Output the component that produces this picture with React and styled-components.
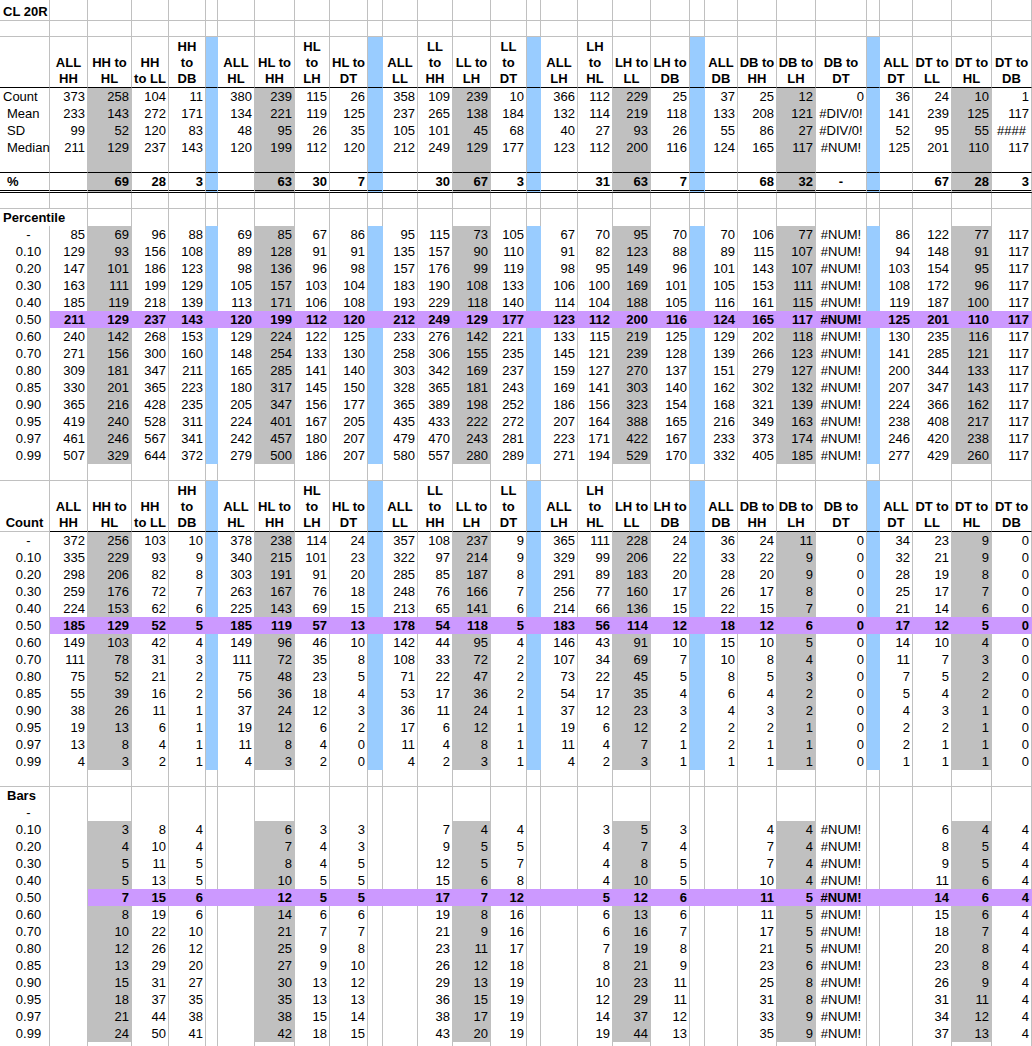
import React from 'react'
import styled, { createGlobalStyle } from 'styled-components'

// column widths in px, read off the sheet
const COLS = [50, 38, 44, 37, 37, 12, 37, 40, 35, 38, 15, 35, 35, 38, 36, 14, 37, 35, 38, 39, 15, 33, 39, 39, 51, 13, 33, 39, 40, 40]
const BLUE = [5, 10, 15, 20, 25]
const GRAY = [2, 7, 13, 18, 23, 28]
const ALL = [1, 6, 11, 16, 21, 26]
const DATA_COLS = COLS.map((_, i) => i).filter(i => i > 0 && !BLUE.includes(i))
const BAR_COLS = DATA_COLS.filter(i => !ALL.includes(i))

const GRID = '#c0c0c0'
const FILLS = { gray: '#c0c0c0', blue: '#99ccff', purple: '#cc99ff' }

const HEADS = [
  ['ALL', 'HH'], ['HH to', 'HL'], ['HH', 'to LL'], ['HH', 'to', 'DB'],
  ['ALL', 'HL'], ['HL to', 'HH'], ['HL', 'to', 'LH'], ['HL to', 'DT'],
  ['ALL', 'LL'], ['LL', 'to', 'HH'], ['LL to', 'LH'], ['LL', 'to', 'DT'],
  ['ALL', 'LH'], ['LH', 'to', 'HL'], ['LH to', 'LL'], ['LH to', 'DB'],
  ['ALL', 'DB'], ['DB to', 'HH'], ['DB to', 'LH'], ['DB to', 'DT'],
  ['ALL', 'DT'], ['DT to', 'LL'], ['DT to', 'HL'], ['DT to', 'DB'],
]

const STATS = [
  ['Count', '373 258 104 11 380 239 115 26 358 109 239 10 366 112 229 25 37 25 12 0 36 24 10 1', 3],
  ['Mean', '233 143 272 171 134 221 119 125 237 265 138 184 132 114 219 118 133 208 121 #DIV/0! 141 239 125 117', 7],
  ['SD', '99 52 120 83 48 95 26 35 105 101 45 68 40 27 93 26 55 86 27 #DIV/0! 52 95 55 ####', 7],
  ['Median', '211 129 237 143 120 199 112 120 212 249 129 177 123 112 200 116 124 165 117 #NUM! 125 201 110 117', 7],
]
const PCT = '69 28 3 63 30 7 30 67 3 31 63 7 68 32 - 67 28 3'

const LEVELS = ['-', '0.10', '0.20', '0.30', '0.40', '0.50', '0.60', '0.70', '0.80', '0.85', '0.90', '0.95', '0.97', '0.99']

const PERCENTILE = [
  '85 69 96 88 69 85 67 86 95 115 73 105 67 70 95 70 70 106 77 #NUM! 86 122 77 117',
  '129 93 156 108 89 128 91 91 135 157 90 110 91 82 123 88 89 115 107 #NUM! 94 148 91 117',
  '147 101 186 123 98 136 96 98 157 176 99 119 98 95 149 96 101 143 107 #NUM! 103 154 95 117',
  '163 111 199 129 105 157 103 104 183 190 108 133 106 100 169 101 105 153 111 #NUM! 108 172 96 117',
  '185 119 218 139 113 171 106 108 193 229 118 140 114 104 188 105 116 161 115 #NUM! 119 187 100 117',
  '211 129 237 143 120 199 112 120 212 249 129 177 123 112 200 116 124 165 117 #NUM! 125 201 110 117',
  '240 142 268 153 129 224 122 125 233 276 142 221 133 115 219 125 129 202 118 #NUM! 130 235 116 117',
  '271 156 300 160 148 254 133 130 258 306 155 235 145 121 239 128 139 266 123 #NUM! 141 285 121 117',
  '309 181 347 211 165 285 141 140 303 342 169 237 159 127 270 137 151 279 127 #NUM! 200 344 133 117',
  '330 201 365 223 180 317 145 150 328 365 181 243 169 141 303 140 162 302 132 #NUM! 207 347 143 117',
  '365 216 428 235 205 347 156 177 365 389 198 252 186 156 323 154 168 321 139 #NUM! 224 366 162 117',
  '419 240 528 311 224 401 167 205 435 433 222 272 207 164 388 165 216 349 163 #NUM! 238 408 217 117',
  '461 246 567 341 242 457 180 207 479 470 243 281 223 171 422 167 233 373 174 #NUM! 246 420 238 117',
  '507 329 644 372 279 500 186 207 580 557 280 289 271 194 529 170 332 405 185 #NUM! 277 429 260 117',
]

const COUNTS = [
  '372 256 103 10 378 238 114 24 357 108 237 9 365 111 228 24 36 24 11 0 34 23 9 0',
  '335 229 93 9 340 215 101 23 322 97 214 9 329 99 206 22 33 22 9 0 32 21 9 0',
  '298 206 82 8 303 191 91 20 285 85 187 8 291 89 183 20 28 20 9 0 28 19 8 0',
  '259 176 72 7 263 167 76 18 248 76 166 7 256 77 160 17 26 17 8 0 25 17 7 0',
  '224 153 62 6 225 143 69 15 213 65 141 6 214 66 136 15 22 15 7 0 21 14 6 0',
  '185 129 52 5 185 119 57 13 178 54 118 5 183 56 114 12 18 12 6 0 17 12 5 0',
  '149 103 42 4 149 96 46 10 142 44 95 4 146 43 91 10 15 10 5 0 14 10 4 0',
  '111 78 31 3 111 72 35 8 108 33 72 2 107 34 69 7 10 8 4 0 11 7 3 0',
  '75 52 21 2 75 48 23 5 71 22 47 2 73 22 45 5 8 5 3 0 7 5 2 0',
  '55 39 16 2 56 36 18 4 53 17 36 2 54 17 35 4 6 4 2 0 5 4 2 0',
  '38 26 11 1 37 24 12 3 36 11 24 1 37 12 23 3 4 3 2 0 4 3 1 0',
  '19 13 6 1 19 12 6 2 17 6 12 1 19 6 12 2 2 2 1 0 2 2 1 0',
  '13 8 4 1 11 8 4 0 11 4 8 1 11 4 7 1 2 1 1 0 2 1 1 0',
  '4 3 2 1 4 3 2 0 4 2 3 1 4 2 3 1 1 1 1 0 1 1 1 0',
]

const BARS = [
  '3 8 4 6 3 3 7 4 4 3 5 3 4 4 #NUM! 6 4 4',
  '4 10 4 7 4 3 9 5 5 4 7 4 7 4 #NUM! 8 5 4',
  '5 11 5 8 4 5 12 5 7 4 8 5 7 4 #NUM! 9 5 4',
  '5 13 5 10 5 5 15 6 8 4 10 5 10 4 #NUM! 11 6 4',
  '7 15 6 12 5 5 17 7 12 5 12 6 11 5 #NUM! 14 6 4',
  '8 19 6 14 6 6 19 8 16 6 13 6 11 5 #NUM! 15 6 4',
  '10 22 10 21 7 7 21 9 16 6 16 7 17 5 #NUM! 18 7 4',
  '12 26 12 25 9 8 23 11 17 7 19 8 21 5 #NUM! 20 8 4',
  '13 29 20 27 9 10 26 12 18 8 21 9 23 6 #NUM! 23 8 4',
  '15 31 27 30 13 12 29 13 19 10 23 11 25 8 #NUM! 26 9 4',
  '18 37 35 35 13 13 36 15 19 12 29 11 31 8 #NUM! 31 11 4',
  '21 44 38 38 15 14 38 17 19 14 37 12 33 9 #NUM! 34 12 4',
  '24 50 41 42 18 15 43 20 19 19 44 13 35 9 #NUM! 37 13 4',
]

const toMap = (cols, line) => {
  const vals = line.split(' ')
  const m = {}
  cols.forEach((c, i) => { m[c] = vals[i] })
  return m
}

const GlobalStyle = createGlobalStyle`
  html, body {
    margin: 0;
    padding: 0;
    background: #fff;
  }
  body {
    font-family: "Liberation Sans", Arial, sans-serif;
    font-size: 13px;
    color: #000;
  }
`

const Sheet = styled.div`
  width: 1032px;
  height: 1046px;
  overflow: hidden;
`

const Row = styled.div`
  display: grid;
  grid-template-columns: ${COLS.map(w => w + 'px').join(' ')};
  height: ${p => p.$h}px;
`

const edge = p => (p.$fill ? FILLS[p.$fill] : GRID)

const Cell = styled.div`
  box-sizing: border-box;
  grid-column: span ${p => p.$span || 1};
  background: ${p => (p.$fill ? FILLS[p.$fill] : '#fff')};
  border-right: 1px solid ${edge};
  border-bottom: ${p =>
    p.$rule === 'double' ? '3px double #000' : p.$rule === 'line' ? '1px solid #000' : `1px solid ${edge(p)}`};
  padding: ${p => p.$top ?? 1}px 2px 0 ${p => p.$pad ?? 2}px;
  line-height: 16px;
  text-align: ${p => p.$align || 'right'};
  font-weight: ${p => (p.$bold ? 700 : 400)};
  white-space: nowrap;
`

const HeadCell = styled(Cell)`
  display: flex;
  flex-direction: column;
  justify-content: flex-end;
  align-items: center;
  padding: 0;
  font-weight: 700;
`

const isMark = v => typeof v === 'string' && (v.startsWith('#') || v === '-')

function SheetRow({ h = 17, label, labelPad = 3, labelAlign = 'left', labelBold, labelSpan = 1, labelTop, values = {}, blue, gray, purpleFrom, bold, rule, top }) {
  const cells = [
    <Cell key="l" $span={labelSpan} $align={labelAlign} $pad={labelPad} $bold={labelBold} $rule={rule} $top={labelTop ?? top}>
      {label}
    </Cell>,
  ]
  for (let i = labelSpan; i < COLS.length; i++) {
    let fill = null
    if (purpleFrom != null && i >= purpleFrom) fill = 'purple'
    else if (blue && BLUE.includes(i)) fill = 'blue'
    else if (gray && GRAY.includes(i)) fill = 'gray'
    const v = values[i]
    cells.push(
      <Cell key={i} $fill={fill} $align={isMark(v) ? 'center' : 'right'} $bold={bold} $rule={rule} $top={top}>
        {v}
      </Cell>
    )
  }
  return <Row $h={h}>{cells}</Row>
}

function HeaderRow({ label, labelRule }) {
  const cells = [
    <HeadCell key="l" $rule={labelRule}>
      {label}
    </HeadCell>,
  ]
  let k = 0
  for (let i = 1; i < COLS.length; i++) {
    if (BLUE.includes(i)) {
      cells.push(<HeadCell key={i} $fill="blue" $rule="line" />)
    } else {
      const lines = HEADS[k++]
      cells.push(
        <HeadCell key={i} $rule="line">
          {lines.map(t => (
            <span key={t}>{t}</span>
          ))}
        </HeadCell>
      )
    }
  }
  return <Row $h={51}>{cells}</Row>
}

function LevelRows({ data, cols, purpleFrom }) {
  return LEVELS.map((lvl, r) => {
    const line = cols === BAR_COLS ? (r === 0 ? null : data[r - 1]) : data[r]
    const mid = lvl === '0.50'
    return (
      <SheetRow
        key={lvl}
        label={lvl}
        labelAlign="center"
        labelPad={10}
        values={line ? toMap(cols, line) : {}}
        blue={cols !== BAR_COLS}
        gray={line != null}
        purpleFrom={mid ? purpleFrom : undefined}
        bold={mid}
      />
    )
  })
}

export default function App() {
  return (
    <Sheet>
      <GlobalStyle />
      <SheetRow h={21} label="CL 20R" labelBold top={4} />
      <SheetRow h={16} top={0} />
      <HeaderRow labelRule="line" />
      {STATS.map(([name, line, pad]) => (
        <SheetRow key={name} label={name} labelPad={pad} values={toMap(DATA_COLS, line)} blue gray />
      ))}
      <SheetRow blue gray rule="line" />
      <SheetRow h={20} label="%" labelPad={7} labelBold values={toMap(BAR_COLS, PCT)} blue gray bold rule="double" />
      <SheetRow h={16} top={0} />
      <SheetRow label="Percentile" labelBold labelSpan={2} />
      <LevelRows data={PERCENTILE} cols={DATA_COLS} purpleFrom={1} />
      <SheetRow />
      <HeaderRow label="Count" />
      <LevelRows data={COUNTS} cols={DATA_COLS} purpleFrom={1} />
      <SheetRow />
      <SheetRow label="Bars" labelBold labelPad={7} />
      <LevelRows data={BARS} cols={BAR_COLS} purpleFrom={2} />
      <SheetRow />
    </Sheet>
  )
}
